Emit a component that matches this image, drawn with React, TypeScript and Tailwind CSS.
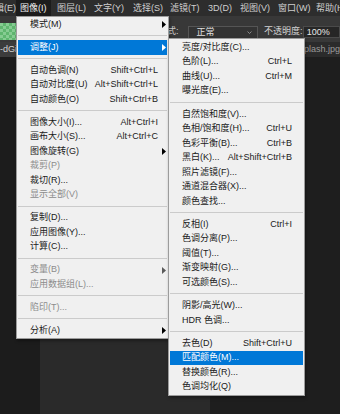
import React from "react";

type Item =
  | { sep: true }
  | { label: string; shortcut?: string; arrow?: boolean; disabled?: boolean; active?: boolean };

const SEP: Item = { sep: true };

const IMAGE_MENU: Item[] = [
  { label: "模式(M)", arrow: true },
  SEP,
  { label: "调整(J)", arrow: true, active: true },
  SEP,
  { label: "自动色调(N)", shortcut: "Shift+Ctrl+L" },
  { label: "自动对比度(U)", shortcut: "Alt+Shift+Ctrl+L" },
  { label: "自动颜色(O)", shortcut: "Shift+Ctrl+B" },
  SEP,
  { label: "图像大小(I)...", shortcut: "Alt+Ctrl+I" },
  { label: "画布大小(S)...", shortcut: "Alt+Ctrl+C" },
  { label: "图像旋转(G)", arrow: true },
  { label: "裁剪(P)", disabled: true },
  { label: "裁切(R)..." },
  { label: "显示全部(V)", disabled: true },
  SEP,
  { label: "复制(D)..." },
  { label: "应用图像(Y)..." },
  { label: "计算(C)..." },
  SEP,
  { label: "变量(B)", arrow: true, disabled: true },
  { label: "应用数据组(L)...", disabled: true },
  SEP,
  { label: "陷印(T)...", disabled: true },
  SEP,
  { label: "分析(A)", arrow: true },
];

const ADJUST_MENU: Item[] = [
  { label: "亮度/对比度(C)..." },
  { label: "色阶(L)...", shortcut: "Ctrl+L" },
  { label: "曲线(U)...", shortcut: "Ctrl+M" },
  { label: "曝光度(E)..." },
  SEP,
  { label: "自然饱和度(V)..." },
  { label: "色相/饱和度(H)...", shortcut: "Ctrl+U" },
  { label: "色彩平衡(B)...", shortcut: "Ctrl+B" },
  { label: "黑白(K)...", shortcut: "Alt+Shift+Ctrl+B" },
  { label: "照片滤镜(F)..." },
  { label: "通道混合器(X)..." },
  { label: "颜色查找..." },
  SEP,
  { label: "反相(I)", shortcut: "Ctrl+I" },
  { label: "色调分离(P)..." },
  { label: "阈值(T)..." },
  { label: "渐变映射(G)..." },
  { label: "可选颜色(S)..." },
  SEP,
  { label: "阴影/高光(W)..." },
  { label: "HDR 色调..." },
  SEP,
  { label: "去色(D)", shortcut: "Shift+Ctrl+U" },
  { label: "匹配颜色(M)...", active: true },
  { label: "替换颜色(R)..." },
  { label: "色调均化(Q)" },
];

const MENUBAR = [
  { label: "编辑(E)", cls: "w-[30px] -ml-[14px]" },
  { label: "图像(I)", cls: "w-[35px] pl-[4px] bg-[#1c1c1c] text-[#f2f2f2]" },
  { label: "图层(L)", cls: "w-[38px] pl-[6px]" },
  { label: "文字(Y)", cls: "w-[39px] pl-[5px]" },
  { label: "选择(S)", cls: "w-[37px] pl-[5px]" },
  { label: "滤镜(T)", cls: "w-[38px] pl-[5px]" },
  { label: "3D(D)", cls: "w-[32px] pl-[5px]" },
  { label: "视图(V)", cls: "w-[38px] pl-[5px]" },
  { label: "窗口(W)", cls: "w-[38px] pl-[5px]" },
  { label: "帮助(H)", cls: "w-[40px] pl-[5px]" },
];

function Arrow() {
  return (
    <svg width="4" height="7" viewBox="0 0 4 7" className="shrink-0">
      <path d="M0 0L4 3.5L0 7Z" fill="currentColor" />
    </svg>
  );
}

function Menu({ items, sub }: { items: Item[]; sub?: boolean }) {
  return (
    <div className={`flex flex-col ${sub ? "py-[1px]" : "py-0"}`}>
      {items.map((it, i) => {
        if ("sep" in it) {
          return (
            <div key={i} className={`flex items-center mx-[1px] ${sub ? "h-[8.8px]" : "h-[8.5px]"}`}>
              <div className="h-px w-full bg-[#cbcbcb]" />
            </div>
          );
        }
        const color = it.active ? "bg-[#0078d7] text-white" : it.disabled ? "text-[#8c8c8c]" : "text-[#1a1a1a]";
        return (
          <div
            key={i}
            className={`relative flex items-center h-[14.5px] mx-[1px] pl-[12px] ${sub ? "pr-[11px]" : "pr-[9px]"} ${color}`}
          >
            <span className="flex-1 whitespace-nowrap">{it.label}</span>
            {it.shortcut && <span className="whitespace-nowrap">{it.shortcut}</span>}
            {it.arrow && (
              <span className={`absolute right-[1px] top-[4px] ${it.active ? "text-white" : it.disabled ? "text-[#5a5a5a]" : "text-black"}`}>
                <Arrow />
              </span>
            )}
          </div>
        );
      })}
    </div>
  );
}

export default function App() {
  return (
    <div className="relative w-[340px] h-[414px] overflow-hidden bg-[#1e1e1e] font-['Liberation_Sans','Noto_Sans_CJK_SC',sans-serif] text-[9px] leading-none select-none">
      {/* Menu bar */}
      <div className="flex h-[16px] bg-[#2d2d2d] text-[#cfcfcf]">
        {MENUBAR.map((m) => (
          <div key={m.label} className={`flex items-center shrink-0 whitespace-nowrap ${m.cls}`}>
            {m.label}
          </div>
        ))}
      </div>

      {/* Options bar */}
      <div className="flex items-start h-[26px] bg-[#383838] text-[#d0d0d0]">
        <svg width="16" height="17" className="mt-[7px] shrink-0">
          <defs>
            <pattern id="chk" width="6" height="6" patternUnits="userSpaceOnUse">
              <rect width="6" height="6" fill="#5fb66f" />
              <rect width="3" height="3" fill="#86cc92" />
              <rect x="3" y="3" width="3" height="3" fill="#86cc92" />
            </pattern>
          </defs>
          <rect width="16" height="17" fill="url(#chk)" />
        </svg>
        <div className="ml-[142px] w-[32px] mt-[11px] whitespace-nowrap">模式:</div>
        <div className="mt-[10px] w-[75px] h-[13px] flex items-center justify-between pl-[8px] pr-[5px] border border-[#555555] bg-[#333333] text-[#e0e0e0]">
          <span>正常</span>
          <svg width="5" height="3" viewBox="0 0 5 3">
            <path d="M0.5 0.5L2.5 2.5L4.5 0.5" stroke="#a0a0a0" fill="none" strokeWidth="0.8" />
          </svg>
        </div>
        <div className="ml-[6px] w-[42px] mt-[11px] whitespace-nowrap">不透明度:</div>
        <div className="mt-[10px] w-[40px] h-[12px] flex items-center pl-[3px] border border-[#4a4a4a] bg-[#262626] text-[#e8e8e8]">
          100%
        </div>
      </div>

      {/* Document tabs */}
      <div className="flex h-[15px] bg-[#2b2b2b] text-[#9a9a9a]">
        <div className="w-[140px] flex items-center bg-[#3c3c3c] text-[#d2d2d2] whitespace-nowrap">-dGi</div>
        <div className="w-[140px]" />
        <div className="flex-1 flex items-center pl-[11px] whitespace-nowrap">unsplash.jpg</div>
      </div>

      {/* Workspace */}
      <div className="flex h-[357px]">
        <div className="w-[40px] bg-[#1c1c1c]" />
        <div className="w-[170px] bg-[#2a2a2a]" />
        <div className="flex-1 bg-[#1e1e1e]" />
      </div>

      {/* Image menu */}
      <div className="absolute left-[16px] top-[16px] w-[153px] bg-[#f0f0f0] border border-[#9c9c9c] shadow-[1px_2px_3px_rgba(0,0,0,0.35)]">
        <Menu items={IMAGE_MENU} />
      </div>

      {/* Adjustments submenu */}
      <div className="absolute left-[168px] top-[38px] w-[137px] bg-[#f0f0f0] border border-[#9c9c9c] shadow-[1px_2px_3px_rgba(0,0,0,0.35)]">
        <Menu items={ADJUST_MENU} sub />
      </div>
    </div>
  );
}
